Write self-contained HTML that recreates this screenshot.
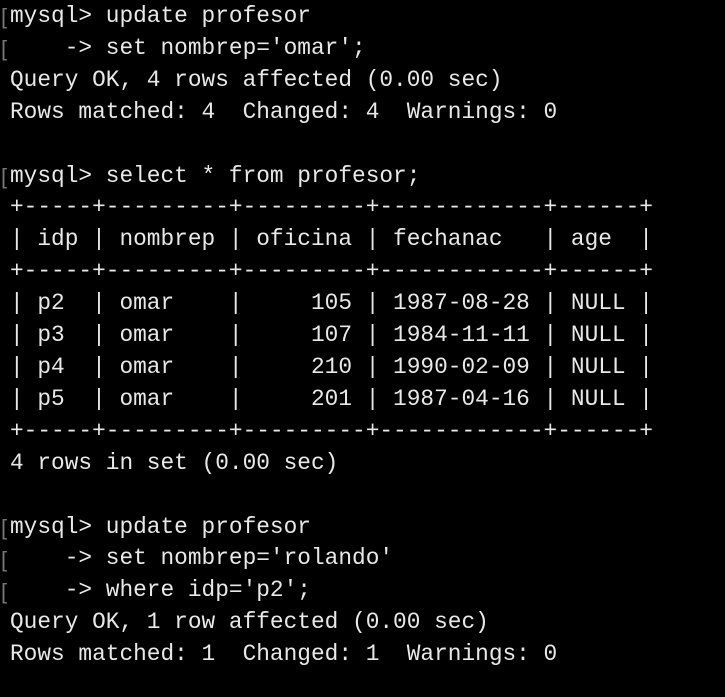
<!DOCTYPE html>
<html><head><meta charset="utf-8"><style>
html,body{margin:0;padding:0;background:#000;width:725px;height:697px;overflow:hidden}
pre{position:absolute;left:10px;top:1px;margin:0;font-family:"Liberation Mono",monospace;font-size:22.8px;line-height:31.9px;color:#e8e8e8;white-space:pre}
.b{position:absolute;left:1px;color:#777;font-family:"Liberation Sans",sans-serif;font-size:22px;line-height:31.9px}
</style></head><body>
<div class="b" style="top:1px">[</div>
<div class="b" style="top:33px">[</div>
<div class="b" style="top:161px">[</div>
<div class="b" style="top:512px">[</div>
<div class="b" style="top:544px">[</div>
<div class="b" style="top:576px">[</div>
<pre>mysql&gt; update profesor
    -&gt; set nombrep='omar';
Query OK, 4 rows affected (0.00 sec)
Rows matched: 4  Changed: 4  Warnings: 0

mysql&gt; select * from profesor;
+-----+---------+---------+------------+------+
| idp | nombrep | oficina | fechanac   | age  |
+-----+---------+---------+------------+------+
| p2  | omar    |     105 | 1987-08-28 | NULL |
| p3  | omar    |     107 | 1984-11-11 | NULL |
| p4  | omar    |     210 | 1990-02-09 | NULL |
| p5  | omar    |     201 | 1987-04-16 | NULL |
+-----+---------+---------+------------+------+
4 rows in set (0.00 sec)

mysql&gt; update profesor
    -&gt; set nombrep='rolando'
    -&gt; where idp='p2';
Query OK, 1 row affected (0.00 sec)
Rows matched: 1  Changed: 1  Warnings: 0</pre>
</body></html>
